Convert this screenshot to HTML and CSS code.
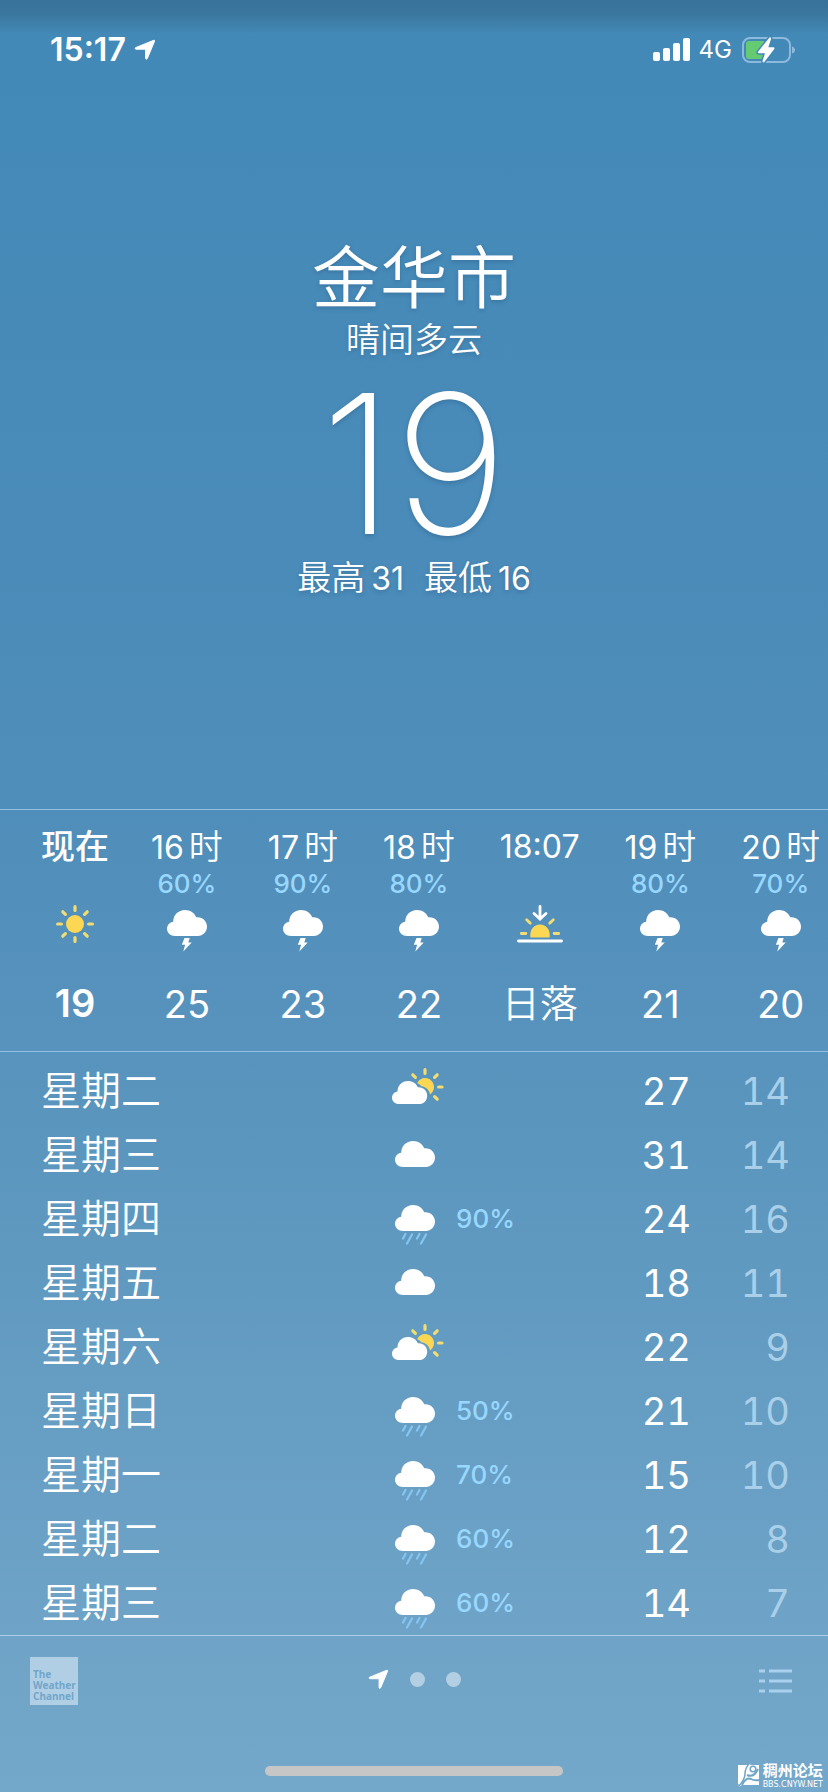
FILE: index.html
```
<!DOCTYPE html>
<html lang="zh-CN">
<head>
<meta charset="utf-8">
<meta name="viewport" content="width=device-width, initial-scale=1">
<title>天气</title>
<link rel="stylesheet" href="styles.css">
</head>
<body>
<svg class="defs" aria-hidden="true">
  <symbol id="cloud" viewBox="0 0 40 26"><path d="M8 26C3.500 26 0 22.900 0 18.800C0 15 2.800 12.200 6.200 11.700C6.200 5 11.400 0 18 0C23.200 0 27.400 2.800 29.300 7.200C35.500 6.600 40 11 40 16.600C40 22 36 26 30.800 26Z" fill="#fff"/></symbol>
  <symbol id="sun" viewBox="0 0 38 38"><circle cx="19" cy="19" r="9" fill="#fbd754"/><g stroke="#f3dc72" stroke-width="3.200" stroke-linecap="round"><path d="M19 1.600v3.800M19 32.600v3.800M1.600 19h3.800M32.600 19h3.800M6.800 6.800l2.600 2.600M28.600 28.600l2.600 2.600M31.200 6.800l-2.600 2.600M9.400 28.600l-2.600 2.600"/></g></symbol>
  <symbol id="storm" viewBox="0 0 40 42"><use href="#cloud" width="40" height="26"/><path d="M17.500 28h5.200l-1.400 4.500h3.400L16.300 41.500l1.800-6.700h-3.300z" fill="#fff"/></symbol>
  <symbol id="rain" viewBox="0 0 40 40"><use href="#cloud" width="40" height="26"/><path d="M10.500 29l-2.500 4.500M17 29.500L12 38.500M24.500 29l-2.500 4.500M31 29.500L26 38.500" stroke="#86c5f0" stroke-width="2.200" stroke-linecap="round"/></symbol>
  <symbol id="partly" viewBox="0 0 52 37"><g stroke="#f3dc72" stroke-width="3.200" stroke-linecap="round"><path d="M33 1.700v3.800M20.800 6.800l2.600 2.600M45.200 6.800l-2.600 2.600M46.600 19h3.400M42.600 28.600l2.600 2.600"/></g><path d="M25.200 15.200C26.500 12 29.500 10 33 10C38 10 42 14 42 19C42 22 40.500 24.800 38 26.400C37 21.500 33.500 18.600 29.200 18.300C28.300 16.900 27 15.900 25.200 15.200Z" fill="#fbd754"/><path d="M7 36C3 36 0 33.300 0 29.700C0 26.400 2.400 23.900 5.500 23.500C5.500 17.500 10 13 16 13C20.500 13 24.200 15.400 25.900 19.300C31.300 18.800 35.200 22.700 35.200 27.700C35.200 32.400 31.700 36 27.200 36Z" fill="#fff"/></symbol>
  <symbol id="sunset" viewBox="0 0 46 38"><path d="M13.400 32.500C12.400 24.500 17 19.500 23 19.500S33.600 24.500 32.600 32.500Z" fill="#fbd754"/><g fill="none" stroke-linecap="round"><path d="M4.300 28.500h4.600M37.100 28.500h4.600M9.700 14.700l3.600 3.600M36.300 14.700l-3.600 3.600" stroke="#f3dc72" stroke-width="2.800"/><path d="M23 1.500v12M17 8.500l6 5.500l6-5.500M1.500 36h43" stroke="#fff" stroke-width="2.800"/></g></symbol>
  <symbol id="arrow" viewBox="0 0 22 22"><path d="M1.500 8.700L19.700 1.300Q20.900 1 20.500 2.300L13.300 19.600Q12.200 21 11.600 19.600V10.800Q11.600 10.200 11 10.200H2Q.4 9.600 1.500 8.700Z" fill="#fff" stroke="#fff" stroke-width="1" stroke-linejoin="round"/></symbol>
</svg>

<header class="status">
  <div class="status-side">
    <time class="clock">15:17</time>
    <svg class="arrow"><use href="#arrow"/></svg>
  </div>
  <div class="status-side">
    <svg class="signal" viewBox="0 0 38 24"><g fill="#fff"><rect x="0" y="14" width="7" height="9" rx="2"/><rect x="10" y="10" width="7" height="13" rx="2"/><rect x="20" y="5" width="7" height="18" rx="2"/><rect x="30" y="0" width="7" height="23" rx="2"/></g></svg>
    <span class="network">4G</span>
    <svg class="battery" viewBox="0 0 54 28"><rect x="1" y="2" width="47" height="24" rx="7" fill="none" stroke="#8cb9dc" stroke-width="2"/><path d="M50 10.500q3 1 3 3.500t-3 3.500z" fill="#8cb9dc"/><path d="M4 8q0-3 3-3H22V23H7q-3 0-3-3z" fill="#65cb72"/><path d="M27.500 1.500L16 15.700Q15.200 17.300 17 17.300H23L20.500 25Q20.500 27.200 22.300 26L32.300 13Q33 11.300 31.300 11.300H26.300L29 3Q29 .5 27.500 1.500Z" fill="#fff" stroke="#4389b6" stroke-width="3" paint-order="stroke"/></svg>
  </div>
</header>

<main>
  <section class="current">
    <h1 class="city">金华市</h1>
    <p class="condition">晴间多云</p>
    <p class="temperature">19</p>
    <p class="range"><span>最高<b class="figure">31</b></span><span>最低<b class="figure">16</b></span></p>
  </section>

  <ol class="hourly">
    <li class="hour hour-now"><span class="hour-label">现在</span><span class="chance"></span><svg class="hour-icon sun"><use href="#sun"/></svg><span class="hour-temp">19</span></li>
    <li class="hour"><span class="hour-label">16<i class="unit">时</i></span><span class="chance">60%</span><svg class="hour-icon storm"><use href="#storm"/></svg><span class="hour-temp">25</span></li>
    <li class="hour"><span class="hour-label">17<i class="unit">时</i></span><span class="chance">90%</span><svg class="hour-icon storm"><use href="#storm"/></svg><span class="hour-temp">23</span></li>
    <li class="hour"><span class="hour-label">18<i class="unit">时</i></span><span class="chance">80%</span><svg class="hour-icon storm"><use href="#storm"/></svg><span class="hour-temp">22</span></li>
    <li class="hour"><span class="hour-label">18:07</span><span class="chance"></span><svg class="hour-icon sunset"><use href="#sunset"/></svg><span class="hour-temp hour-event">日落</span></li>
    <li class="hour"><span class="hour-label">19<i class="unit">时</i></span><span class="chance">80%</span><svg class="hour-icon storm"><use href="#storm"/></svg><span class="hour-temp">21</span></li>
    <li class="hour"><span class="hour-label">20<i class="unit">时</i></span><span class="chance">70%</span><svg class="hour-icon storm"><use href="#storm"/></svg><span class="hour-temp">20</span></li>
  </ol>

  <ol class="daily">
    <li class="day"><span class="weekday">星期二</span><svg class="day-icon partly"><use href="#partly"/></svg><span class="chance"></span><span class="high">27</span><span class="low">14</span></li>
    <li class="day"><span class="weekday">星期三</span><svg class="day-icon cloud"><use href="#cloud"/></svg><span class="chance"></span><span class="high">31</span><span class="low">14</span></li>
    <li class="day"><span class="weekday">星期四</span><svg class="day-icon rain"><use href="#rain"/></svg><span class="chance">90%</span><span class="high">24</span><span class="low">16</span></li>
    <li class="day"><span class="weekday">星期五</span><svg class="day-icon cloud"><use href="#cloud"/></svg><span class="chance"></span><span class="high">18</span><span class="low">11</span></li>
    <li class="day"><span class="weekday">星期六</span><svg class="day-icon partly"><use href="#partly"/></svg><span class="chance"></span><span class="high">22</span><span class="low">9</span></li>
    <li class="day"><span class="weekday">星期日</span><svg class="day-icon rain"><use href="#rain"/></svg><span class="chance">50%</span><span class="high">21</span><span class="low">10</span></li>
    <li class="day"><span class="weekday">星期一</span><svg class="day-icon rain"><use href="#rain"/></svg><span class="chance">70%</span><span class="high">15</span><span class="low">10</span></li>
    <li class="day"><span class="weekday">星期二</span><svg class="day-icon rain"><use href="#rain"/></svg><span class="chance">60%</span><span class="high">12</span><span class="low">8</span></li>
    <li class="day"><span class="weekday">星期三</span><svg class="day-icon rain"><use href="#rain"/></svg><span class="chance">60%</span><span class="high">14</span><span class="low">7</span></li>
  </ol>
</main>

<footer class="toolbar">
  <a class="provider" href="#">The<br>Weather<br>Channel</a>
  <nav class="pages" aria-label="城市">
    <button class="page" aria-label="当前位置"><svg class="page-arrow"><use href="#arrow"/></svg></button>
    <button class="page dot" aria-label="城市 2"></button>
    <button class="page dot" aria-label="城市 3"></button>
  </nav>
  <button class="list" aria-label="城市列表"><svg class="list-icon" viewBox="0 0 34 24"><path d="M1 2h6M1 12h6M1 22h6M11 2h23M11 12h23M11 22h23" stroke="#a9d0ec" stroke-width="3"/></svg></button>
</footer>
<div class="home"></div>

<div class="watermark">
  <svg class="mark" viewBox="0 0 26 28"><path d="M2 4H12L15 1L14 4H23V24H6L1 27L3 23H2Z" fill="#fff"/><path d="M1 27Q9 19 9 13Q9 6 15 1" fill="none" stroke="#6ea5c8" stroke-width="1.500"/><path d="M11 14Q18 17 22 8M6 24Q10 16 15 18Q18 20 24 19" fill="none" stroke="#6ea5c8" stroke-width="2"/><circle cx="17" cy="8" r="2.800" fill="none" stroke="#6ea5c8" stroke-width="1.500"/></svg>
  <div><strong class="mark-name">稠州论坛</strong><span class="mark-url">BBS.CNYW.NET</span></div>
</div>
</body>
</html>
```
FILE: styles.css
```
* { box-sizing: border-box; margin: 0; padding: 0; }
body {
  position: relative;
  min-height: 100vh;
  display: flex;
  flex-direction: column;
  color: #fff;
  font-family: Inter, "Noto Sans CJK SC", sans-serif;
  font-weight: 350;
  background:
    linear-gradient(#38719a, #3b789f 15px, transparent 34px),
    linear-gradient(#4289b7, #4a8bb9 30%, #528fbb 50%, #5b96be 64%, #6aa0c5 84%, #74a8ca);
}
ol { list-style: none; }
svg { display: block; flex: none; }
button { border: 0; background: none; }
.defs { position: absolute; width: 0; height: 0; }

.status { display: flex; justify-content: space-between; padding: 30px 32px 0 50px; }
.status-side { display: flex; align-items: center; height: 40px; }
.clock { font-size: 32px; font-weight: 600; line-height: 40px; }
.arrow { width: 22px; height: 22px; margin-left: 8px; }
.signal { width: 38px; height: 24px; }
.network { margin: 0 10px 0 8px; font-size: 24px; font-weight: 400; line-height: 40px; }
.battery { width: 54px; height: 28px; }

.current {
  display: flex;
  flex-direction: column;
  align-items: center;
  height: 739px;
  padding-top: 168px;
  text-shadow: 0 2px 4px rgb(30 70 110 / 30%);
}
.city { font-size: 68px; font-weight: 350; line-height: 80px; }
.condition { font-size: 34px; line-height: 44px; }
.temperature { margin-top: 10px; font-size: 194px; font-weight: 200; line-height: 184px; }
.range { display: flex; gap: 20px; font-size: 34px; line-height: 44px; }
.figure { margin-left: 6px; font-size: 32px; font-weight: 400; }

.hourly {
  display: flex;
  gap: 45px;
  height: 243px;
  padding: 15px 0 0 41px;
  overflow: hidden;
  border-top: 1px solid #92c0e3;
  border-bottom: 1px solid #92c0e3;
}
.hour { display: flex; flex: none; flex-direction: column; align-items: center; }
.hour-now { margin-right: -3px; }
.hour-label { font-size: 32px; font-weight: 400; line-height: 44px; }
.unit { margin-left: 5px; font-size: 34px; font-style: normal; font-weight: 350; }
.chance { color: #98d7ff; font-size: 26px; font-weight: 500; line-height: 28px; }
.hour .chance { height: 28px; }
.hour-icon { margin-top: 8px; }
.sun { width: 38px; height: 38px; margin-bottom: 4px; }
.storm { width: 40px; height: 42px; margin-top: 12px; margin-bottom: -4px; }
.sunset { width: 46px; height: 38px; margin-bottom: 4px; }
.hour-temp { margin-top: 28px; font-size: 38px; font-weight: 400; line-height: 56px; }
.hour-event { font-weight: 350; }
.hour-now .hour-label { font-size: 34px; font-weight: 500; }
.hour-now .hour-temp { font-weight: 600; }

.daily { padding: 7px 38px 0 41px; border-bottom: 1px solid #aacfe9; }
.day {
  display: grid;
  grid-template-columns: minmax(0, 351px) 52px minmax(0, 1fr) 60px 99px;
  align-items: center;
  height: 64px;
  font-size: 38px;
  line-height: 64px;
}
.weekday { font-size: 40px; }
.cloud { width: 40px; height: 26px; margin: 0 0 2px 3px; }
.rain { width: 40px; height: 40px; margin: 12px 0 0 3px; }
.partly { width: 52px; height: 37px; margin-bottom: 10px; }
.day .chance { padding-left: 12px; }
.high, .low { font-weight: 400; text-align: right; font-variant-numeric: tabular-nums; }
.low { color: #a9cfe9; }

.toolbar {
  display: grid;
  grid-template-columns: 1fr auto 1fr;
  align-items: center;
  padding: 21px 30px 0;
}
.provider {
  width: 48px;
  height: 48px;
  padding: 12px 0 0 3px;
  background: #b0cfe4;
  color: #72a6ca;
  font: 700 10px/11px "Noto Sans", sans-serif;
  text-decoration: none;
}
.pages { display: flex; align-items: center; gap: 21px; margin-bottom: 4px; }
.dot { width: 15px; height: 15px; border-radius: 50%; background: #b2cfe3; }
.page-arrow { width: 21px; height: 21px; }
.list { justify-self: end; margin-right: 6px; }
.list-icon { width: 34px; height: 24px; }
.home { width: 36%; height: 10px; margin: auto auto 16px; border-radius: 5px; background: #c6c6c6; }

.watermark { position: absolute; right: 5px; bottom: 3px; display: flex; align-items: center; gap: 1px; }
.mark { width: 26px; height: 28px; }
.mark-name { display: block; font-size: 15px; line-height: 18px; font-weight: 700; }
.mark-url { display: block; font: 8px/9px "DejaVu Sans", sans-serif; }
```
